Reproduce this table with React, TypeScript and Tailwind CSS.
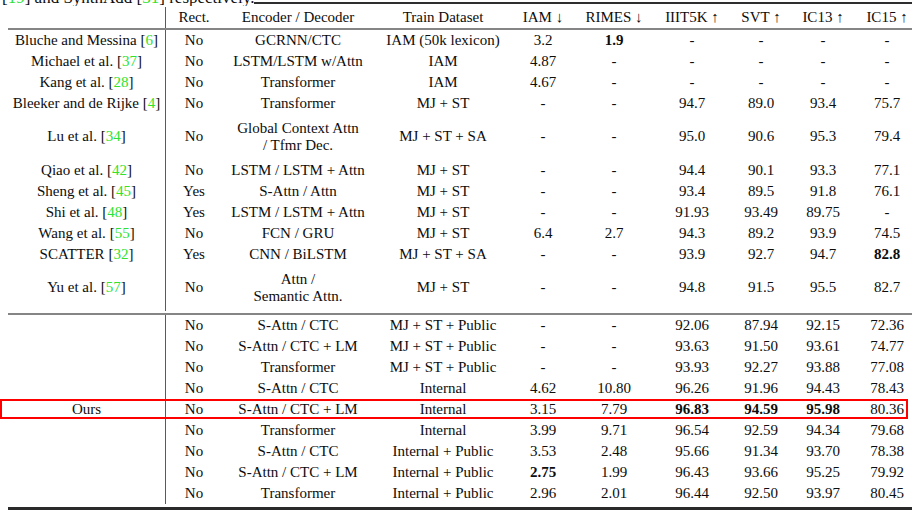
import React from "react"

type Row = {
  name?: string
  cite?: string
  rect: string
  enc: string[]
  train: string
  vals: string[]
  h?: string
  ours?: boolean
}

const cols =
  "grid grid-cols-[158px_56px_152px_138px_62px_80px_76px_62px_62px_66px]"

const prior: Row[] = [
  { name: "Bluche and Messina", cite: "6", rect: "No", enc: ["GCRNN/CTC"], train: "IAM (50k lexicon)", vals: ["3.2", "*1.9", "-", "-", "-", "-"] },
  { name: "Michael et al.", cite: "37", rect: "No", enc: ["LSTM/LSTM w/Attn"], train: "IAM", vals: ["4.87", "-", "-", "-", "-", "-"] },
  { name: "Kang et al.", cite: "28", rect: "No", enc: ["Transformer"], train: "IAM", vals: ["4.67", "-", "-", "-", "-", "-"] },
  { name: "Bleeker and de Rijke", cite: "4", rect: "No", enc: ["Transformer"], train: "MJ + ST", vals: ["-", "-", "94.7", "89.0", "93.4", "75.7"] },
  { name: "Lu et al.", cite: "34", rect: "No", enc: ["Global Context Attn", "/ Tfmr Dec."], train: "MJ + ST + SA", vals: ["-", "-", "95.0", "90.6", "95.3", "79.4"], h: "h-[46px]" },
  { name: "Qiao et al.", cite: "42", rect: "No", enc: ["LSTM / LSTM + Attn"], train: "MJ + ST", vals: ["-", "-", "94.4", "90.1", "93.3", "77.1"] },
  { name: "Sheng et al.", cite: "45", rect: "Yes", enc: ["S-Attn / Attn"], train: "MJ + ST", vals: ["-", "-", "93.4", "89.5", "91.8", "76.1"] },
  { name: "Shi et al.", cite: "48", rect: "Yes", enc: ["LSTM / LSTM + Attn"], train: "MJ + ST", vals: ["-", "-", "91.93", "93.49", "89.75", "-"] },
  { name: "Wang et al.", cite: "55", rect: "No", enc: ["FCN / GRU"], train: "MJ + ST", vals: ["6.4", "2.7", "94.3", "89.2", "93.9", "74.5"] },
  { name: "SCATTER", cite: "32", rect: "Yes", enc: ["CNN / BiLSTM"], train: "MJ + ST + SA", vals: ["-", "-", "93.9", "92.7", "94.7", "*82.8"] },
  { name: "Yu et al.", cite: "57", rect: "No", enc: ["Attn /", "Semantic Attn."], train: "MJ + ST", vals: ["-", "-", "94.8", "91.5", "95.5", "82.7"], h: "h-[48px] pb-[2px]" },
]

const ours: Row[] = [
  { rect: "No", enc: ["S-Attn / CTC"], train: "MJ + ST + Public", vals: ["-", "-", "92.06", "87.94", "92.15", "72.36"] },
  { rect: "No", enc: ["S-Attn / CTC + LM"], train: "MJ + ST + Public", vals: ["-", "-", "93.63", "91.50", "93.61", "74.77"] },
  { rect: "No", enc: ["Transformer"], train: "MJ + ST + Public", vals: ["-", "-", "93.93", "92.27", "93.88", "77.08"] },
  { rect: "No", enc: ["S-Attn / CTC"], train: "Internal", vals: ["4.62", "10.80", "96.26", "91.96", "94.43", "78.43"] },
  { name: "Ours", rect: "No", enc: ["S-Attn / CTC + LM"], train: "Internal", vals: ["3.15", "7.79", "*96.83", "*94.59", "*95.98", "80.36"], ours: true },
  { rect: "No", enc: ["Transformer"], train: "Internal", vals: ["3.99", "9.71", "96.54", "92.59", "94.34", "79.68"] },
  { rect: "No", enc: ["S-Attn / CTC"], train: "Internal + Public", vals: ["3.53", "2.48", "95.66", "91.34", "93.70", "78.38"] },
  { rect: "No", enc: ["S-Attn / CTC + LM"], train: "Internal + Public", vals: ["*2.75", "1.99", "96.43", "93.66", "95.25", "79.92"] },
  { rect: "No", enc: ["Transformer"], train: "Internal + Public", vals: ["2.96", "2.01", "96.44", "92.50", "93.97", "80.45"], h: "h-[24px] pb-[3px]" },
]

const Cite = ({ n }: { n: string }) => (
  <>
    [<span className="text-[#2fe22f]">{n}</span>]
  </>
)

const Cell = ({ children, first }: { children?: React.ReactNode; first?: boolean }) => (
  <div
    className={
      first
        ? "flex items-center justify-center whitespace-nowrap border-r border-[#5a5a5a] text-center"
        : "flex items-center justify-center whitespace-nowrap text-center"
    }
  >
    {children}
  </div>
)

const TableRow = ({ row }: { row: Row }) => (
  <div className={`relative ${cols} ${row.h ?? "h-[21px]"}`}>
    <Cell first>
      {row.name && (
        <span>
          {row.name}
          {row.cite && (
            <>
              {" "}
              <Cite n={row.cite} />
            </>
          )}
        </span>
      )}
    </Cell>
    <Cell>{row.rect}</Cell>
    <Cell>
      <div className="flex flex-col items-center">
        {row.enc.map((l) => (
          <span key={l}>{l}</span>
        ))}
      </div>
    </Cell>
    <Cell>{row.train}</Cell>
    {row.vals.map((v, i) =>
      v.startsWith("*") ? (
        <Cell key={i}>
          <span className="font-bold">{v.slice(1)}</span>
        </Cell>
      ) : (
        <Cell key={i}>{v}</Cell>
      )
    )}
    {row.ours && (
      <div className="pointer-events-none absolute -left-[8px] top-0 h-[20px] w-[908px] border-2 border-[#ff0000]" />
    )}
  </div>
)

export default function App() {
  const heads = ["Rect.", "Encoder / Decoder", "Train Dataset", "IAM ↓", "RIMES ↓", "IIIT5K ↑", "SVT ↑", "IC13 ↑", "IC15 ↑"]

  return (
    <div className="h-[512px] w-[912px] overflow-hidden bg-white font-['Liberation_Serif',serif] text-[15px] leading-[17.5px] text-[#0d0d0d]">
      {/* caption tail + top rule */}
      <div className="flex h-[7px] items-start">
        <div className="h-[6px] overflow-hidden pl-[2px]">
          <div className="-mt-[11px] whitespace-nowrap text-[17px] leading-[17px]">
            <Cite n="19" /> and SynthAdd <Cite n="31" /> respectively.
          </div>
        </div>
        <div className="mt-[2px] h-[2px] flex-1 bg-[#2e2e2e]" />
      </div>

      <div className="ml-[8px] w-[912px]">
        <div className={`${cols} h-[21px]`}>
          <Cell first />
          {heads.map((h) => (
            <Cell key={h}>{h}</Cell>
          ))}
        </div>
        <div className="h-[2px] bg-[#858585]" />

        {prior.map((r) => (
          <TableRow key={r.name} row={r} />
        ))}
        <div className="h-[2px] bg-[#858585]" />

        {ours.map((r, i) => (
          <TableRow key={i} row={r} />
        ))}
        <div className="h-[3px] bg-[#2a2a2a]" />
      </div>
    </div>
  )
}
